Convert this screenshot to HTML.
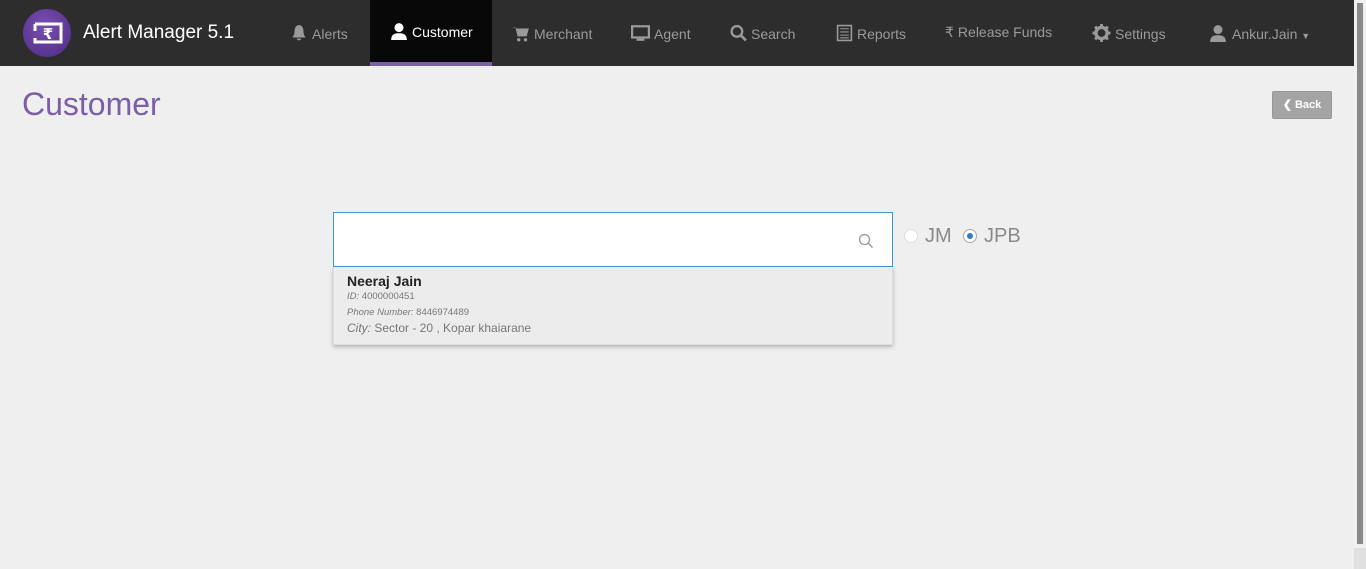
<!DOCTYPE html>
<html><head><meta charset="utf-8"><style>
*{margin:0;padding:0;box-sizing:border-box}
html,body{width:1366px;height:569px;overflow:hidden;background:#efefef;font-family:"Liberation Sans",Arial,sans-serif}
.nav{position:absolute;left:0;top:0;width:1354px;height:66px;background:#2d2d2d}
.logo{position:absolute;left:23px;top:9px;width:48px;height:48px;border-radius:50%;background:radial-gradient(circle at 45% 35%,#7a4fb0,#4c2a85);}
.brand{position:absolute;left:83px;top:22px;color:#fff;font-size:19px}
.item{position:absolute;top:24px;color:#9a9a9a;font-size:14px;white-space:nowrap}
.item svg{vertical-align:-3px;margin-right:4px}
.active{position:absolute;left:370px;top:0;width:122px;height:66px;background:#080808;border-bottom:4px solid #7a5fab}
h1{position:absolute;left:22px;top:86px;font-weight:normal;font-size:32px;color:#7b5ea7}
.back{position:absolute;left:1272px;top:91px;width:60px;height:28px;background:#a4a4a4;border:1px solid #979797;border-radius:2px;color:#fff;font-size:11px;font-weight:bold;text-align:center;line-height:26px}
.search{position:absolute;left:333px;top:212px;width:560px;height:55px;background:#fff;border:1px solid #3a97de}
.dd{position:absolute;left:333px;top:267px;width:560px;height:78px;background:#ececec;box-shadow:0 2px 4px rgba(0,0,0,.25);border:1px solid #ddd;border-top:none}
.radio{position:absolute;top:229px;width:14px;height:14px;border-radius:50%;background:#fff;border:1px solid #ddd}
.rl{position:absolute;top:225px;font-size:20px;color:#8a8a8a}
.sb{position:absolute;left:1354px;top:0;width:12px;height:569px;background:#f0f0f0}
.th{position:absolute;left:1357px;top:3px;width:6px;height:541px;background:#898989}
</style></head><body>
<div class="nav">
 <div class="logo"><svg width="48" height="48" viewBox="0 0 48 48"><path d="M12 15h26v18H12v-4M12 22v-7" fill="none" stroke="#fff" stroke-width="3"/><text x="25" y="30" fill="#fff" font-size="15" font-weight="bold" text-anchor="middle" font-family="DejaVu Sans">₹</text></svg></div>
 <div class="brand">Alert Manager 5.1</div>
 <div class="item" style="left:290px"><svg width="18" height="18" viewBox="0 0 16 16"><path d="M8 1c3 0 4 3 4 6 0 3 2 5 2 5H2s2-2 2-5c0-3 1-6 4-6zM6 13h4c0 2-4 2-4 0z" fill="#9a9a9a"/></svg>Alerts</div>
 <div class="active"></div>
 <div class="item" style="left:390px;top:22px;color:#fff"><svg width="18" height="18" viewBox="0 0 16 16"><circle cx="8" cy="5" r="4" fill="#fff"/><path d="M1 16c0-5 3-6 7-6s7 1 7 6z" fill="#fff"/></svg>Customer</div>
 <div class="item" style="left:512px"><svg width="18" height="18" viewBox="0 0 16 16"><path d="M0 3h3l2 8h8l2-7H5" fill="#9a9a9a"/><circle cx="6" cy="14" r="1.5" fill="#9a9a9a"/><circle cx="12" cy="14" r="1.5" fill="#9a9a9a"/></svg>Merchant</div>
 <div class="item" style="left:631px"><svg width="19" height="18" viewBox="0 0 17 16"><rect x="1" y="2" width="15" height="10" fill="none" stroke="#9a9a9a" stroke-width="2"/><rect x="5" y="13" width="7" height="2" fill="#9a9a9a"/></svg>Agent</div>
 <div class="item" style="left:730px"><svg width="17" height="18" viewBox="0 0 16 16"><circle cx="6.5" cy="6.5" r="5" fill="none" stroke="#9a9a9a" stroke-width="2.2"/><path d="M10 10l5 5" stroke="#9a9a9a" stroke-width="2.5"/></svg>Search</div>
 <div class="item" style="left:836px"><svg width="17" height="18" viewBox="0 0 16 16"><rect x="1.5" y="1" width="13" height="14" fill="none" stroke="#9a9a9a" stroke-width="1.5"/><path d="M4 4h8M4 7h8M4 10h8M4 12.5h8" stroke="#9a9a9a"/></svg>Reports</div>
 <div class="item" style="left:945px"><span style="margin-right:4px">₹</span>Release Funds</div>
 <div class="item" style="left:1092px"><svg width="19" height="18" viewBox="0 0 16 16"><circle cx="8" cy="8" r="5" fill="none" stroke="#9a9a9a" stroke-width="3"/><path d="M8 0v4M8 12v4M0 8h4M12 8h4M2.3 2.3l3 3M10.7 10.7l3 3M13.7 2.3l-3 3M5.3 10.7l-3 3" stroke="#9a9a9a" stroke-width="2.5"/></svg>Settings</div>
 <div class="item" style="left:1208px"><svg width="20" height="18" viewBox="0 0 16 16"><circle cx="8" cy="5" r="4" fill="#9a9a9a"/><path d="M1 16c0-5 3-6 7-6s7 1 7 6z" fill="#9a9a9a"/></svg>Ankur.Jain <span style="font-size:9px">▼</span></div>
</div>
<h1>Customer</h1>
<div class="back">&#10094; Back</div>
<div class="search"><svg style="position:absolute;left:524px;top:20px" width="16" height="16" viewBox="0 0 16 16"><circle cx="6.5" cy="6.5" r="5" fill="none" stroke="#999" stroke-width="1.3"/><path d="M10 10l4.5 4.5" stroke="#999" stroke-width="1.5"/></svg></div>
<div class="dd">
 <div style="position:absolute;left:13px;top:6px;font-size:14px;font-weight:bold;color:#222">Neeraj Jain</div>
 <div style="position:absolute;left:13px;top:24px;font-size:9.5px;color:#777"><i>ID:</i> 4000000451</div>
 <div style="position:absolute;left:13px;top:40px;font-size:9.5px;color:#777"><i>Phone Number:</i> 8446974489</div>
 <div style="position:absolute;left:13px;top:54px;font-size:12px;color:#777"><i>City:</i> Sector - 20 , Kopar khaiarane</div>
</div>
<div class="radio" style="left:904px"></div><div class="rl" style="left:925px">JM</div>
<div class="radio" style="left:963px;border-color:#aaa"><div style="position:absolute;left:3px;top:3px;width:6px;height:6px;border-radius:50%;background:#2c7fc1"></div></div><div class="rl" style="left:984px">JPB</div>
<div class="sb"></div><div class="th"></div>
<div style="position:absolute;left:1354px;top:548px;width:12px;height:21px;background:#e0e0e0"></div>
</body></html>
